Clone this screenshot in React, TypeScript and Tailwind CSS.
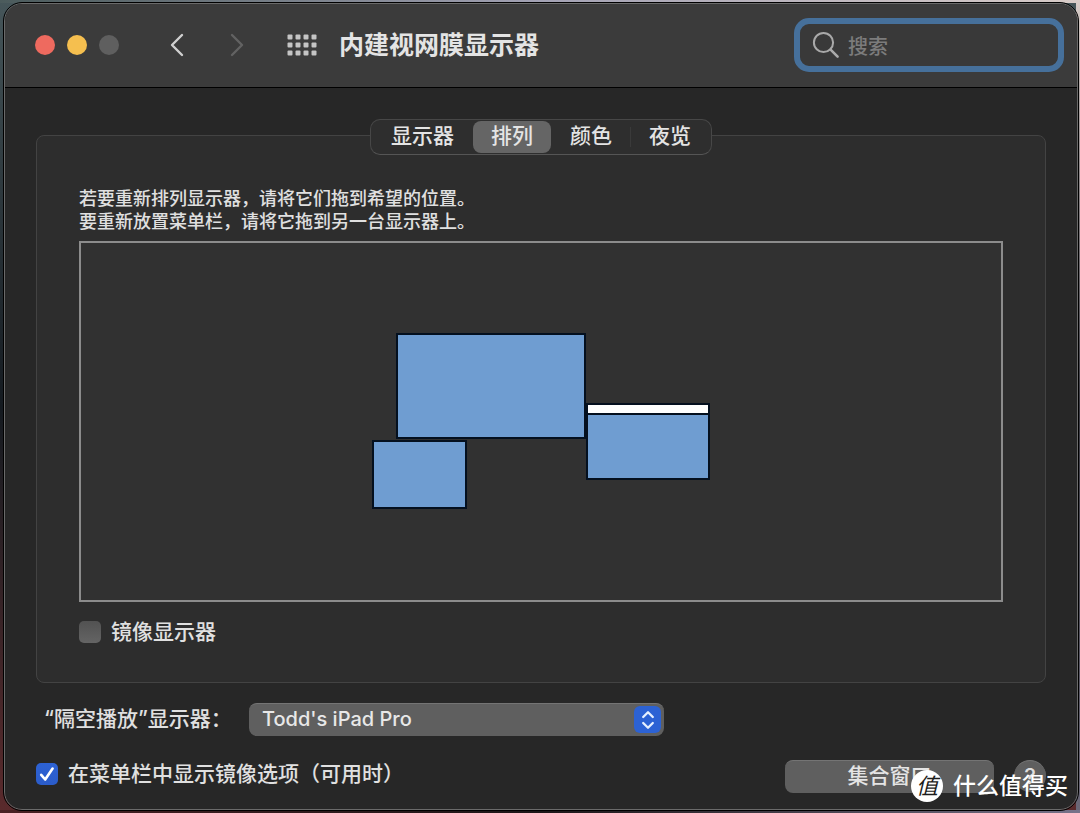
import { useState } from "react";
import { clsx } from "clsx";

const TABS = ["显示器", "排列", "颜色", "夜览"];

const TRAFFIC_LIGHTS = [
  { label: "关闭", color: "bg-[#ee6a5f]" },
  { label: "最小化", color: "bg-[#f5bf4f]" },
  { label: "缩放", color: "bg-[#5f5f5f]" },
];

const DISPLAYS = [
  { name: "外接显示器", box: "left-6 top-0 h-[106px] w-[190px]", menuBar: false },
  { name: "iPad", box: "left-0 top-[107px] h-[69px] w-[95px]", menuBar: false },
  { name: "内建显示器", box: "left-[214px] top-[70px] h-[77px] w-[124px]", menuBar: true },
];

function Chevron({ d, className }: { d: string; className: string }) {
  return (
    <svg viewBox="0 0 14 24" className={clsx("h-6 w-3.5", className)} fill="none" aria-hidden="true">
      <path d={d} stroke="currentColor" strokeWidth="2.4" strokeLinecap="round" strokeLinejoin="round" />
    </svg>
  );
}

function GridIcon() {
  return (
    <svg viewBox="0 0 30 22" className="h-[22px] w-[30px] text-[#c4c4c4]" fill="currentColor" aria-hidden="true">
      {[0, 8, 16].map((y) =>
        [0, 8, 16, 24].map((x) => (
          <rect key={`${x}-${y}`} x={x + 0.5} y={y + 0.5} width="5" height="5" rx="1" />
        )),
      )}
    </svg>
  );
}

function TitleBar() {
  return (
    <header className="flex h-[84px] shrink-0 items-center border-b border-black bg-[#3b3b3b] pr-[13px] pb-0.5 pl-[30px]">
      <div className="flex gap-3">
        {TRAFFIC_LIGHTS.map((light) => (
          <button key={light.label} aria-label={light.label} className={clsx("size-5 rounded-full", light.color)} />
        ))}
      </div>
      <nav className="ml-[51px] flex items-center">
        <button aria-label="后退">
          <Chevron d="M12 2 2 12l10 10" className="text-[#d0d0d0]" />
        </button>
        <button aria-label="前进" className="ml-[46px]">
          <Chevron d="M2 2l10 10L2 22" className="text-[#626262]" />
        </button>
        <button aria-label="显示全部" className="ml-[43px]">
          <GridIcon />
        </button>
      </nav>
      <h1 className="ml-[22px] whitespace-nowrap text-[25px] leading-8 font-bold text-[#e4e4e4]">内建视网膜显示器</h1>
      <label className="ml-auto flex h-[54px] w-[270px] items-center rounded-[15px] border-6 border-[#46709b] bg-[#393939] pl-3">
        <svg viewBox="0 0 28 28" className="size-7 shrink-0" fill="none" aria-hidden="true">
          <circle cx="11.5" cy="11.5" r="9.6" stroke="#a9a9a9" strokeWidth="2" />
          <path d="m18.6 18.6 7 7" stroke="#a9a9a9" strokeWidth="2.6" strokeLinecap="round" />
        </svg>
        <input
          type="search"
          aria-label="搜索"
          placeholder="搜索"
          className="ml-2 w-full min-w-0 bg-transparent pt-1 text-[20px] leading-7 text-[#e4e4e4] outline-none placeholder:text-[#7c7c7c]"
        />
      </label>
    </header>
  );
}

function Tabs({ active, onChange }: { active: string; onChange: (tab: string) => void }) {
  const activeIndex = TABS.indexOf(active);

  return (
    <div
      role="tablist"
      className="flex self-center rounded-[10px] border border-[#474747] border-b-[#555] bg-[#2e2e2e] px-0.5"
    >
      {TABS.map((tab, i) => (
        <div key={tab} className="flex items-center">
          {i > 0 && (
            <span
              className={clsx("h-5 w-px", i !== activeIndex && i !== activeIndex + 1 && "bg-[#3a3a3a]")}
            />
          )}
          <button
            role="tab"
            aria-selected={tab === active}
            onClick={() => onChange(tab)}
            className={clsx(
              "my-px h-8 rounded-lg px-[18px] pb-0.5 text-[21px] leading-[30px] text-[#e4e4e4]",
              tab === active && "bg-[#656565]",
            )}
          >
            {tab}
          </button>
        </div>
      ))}
    </div>
  );
}

function Checkbox({ label, defaultChecked }: { label: string; defaultChecked?: boolean }) {
  return (
    <label className="flex items-center gap-2.5 py-0.5 text-[21px] leading-6">
      <span className="grid size-[22px] place-items-center">
        <input
          type="checkbox"
          defaultChecked={defaultChecked}
          className="peer col-start-1 row-start-1 size-[22px] appearance-none rounded-[5px] bg-linear-to-b from-[#525252] to-[#646464] checked:from-[#2d62d4] checked:to-[#2b5cc9]"
        />
        <svg
          viewBox="0 0 22 22"
          className="pointer-events-none invisible col-start-1 row-start-1 size-[22px] peer-checked:visible"
          fill="none"
          aria-hidden="true"
        >
          <path d="m5.2 11.8 4 4.7 7.4-11" stroke="white" strokeWidth="2.6" strokeLinecap="round" strokeLinejoin="round" />
        </svg>
      </span>
      {label}
    </label>
  );
}

function Arrangement() {
  return (
    <div className="mt-2 flex min-h-[361px] flex-1 items-center justify-center border-2 border-[#8c8c8c] bg-[#313131]">
      <div className="relative h-[178px] w-[338px]">
        {DISPLAYS.map((display) => (
          <div
            key={display.name}
            title={display.name}
            className={clsx("absolute border-2 border-[#04101f] bg-[#6f9dd1]", display.box)}
          >
            {display.menuBar && <div className="h-2.5 border-b-2 border-[#04101f] bg-white" />}
          </div>
        ))}
      </div>
    </div>
  );
}

function AirPlayRow() {
  return (
    <div className="mt-5 flex items-center pl-2">
      <label htmlFor="airplay" className="w-[205px] whitespace-nowrap pb-0.5 text-[21px] leading-[30px]">
        “隔空播放”显示器：
      </label>
      <div className="relative w-[415px]">
        <select
          id="airplay"
          className="block h-[33px] w-full appearance-none rounded-lg border-t border-[#747474] bg-[#5f5f5f] pb-0.5 pl-[13px] text-[20px] leading-[30px] text-[#e8e8e8]"
        >
          <option>Todd's iPad Pro</option>
        </select>
        <span className="pointer-events-none absolute top-[3px] right-[3px] grid size-[27px] place-items-center rounded-md bg-[#2c62d4]">
          <svg viewBox="0 0 14 20" className="h-5 w-3.5" fill="none" aria-hidden="true">
            <path
              d="m2.2 7 4.8-4.8L11.8 7M2.2 13l4.8 4.8 4.8-4.8"
              stroke="#e6f0ff"
              strokeWidth="2.3"
              strokeLinecap="round"
              strokeLinejoin="round"
            />
          </svg>
        </span>
      </div>
    </div>
  );
}

function Watermark() {
  return (
    <div className="pointer-events-none absolute right-3 bottom-3 flex items-center gap-2.5 text-white">
      <span className="grid size-8 place-items-center rounded-full bg-white text-[22px] leading-none font-normal text-[#1c1c1c] italic">
        值
      </span>
      <span className="text-[23px] leading-8">什么值得买</span>
    </div>
  );
}

export default function App() {
  const [tab, setTab] = useState("排列");

  return (
    <div className="relative flex min-h-screen bg-linear-to-b from-[#46565a] via-[#141a20] to-[#5a2a2c] pt-[3px] pr-0.5 pb-1 pl-1 font-[Inter,'Noto_Sans_CJK_SC',sans-serif] font-medium text-[#e0e0e0]">
      <div className="absolute inset-x-0 top-0 h-[3px] bg-linear-to-r from-[#4b5b5c] via-[#a3a2b4] to-[#d8ccc8]" />
      <div className="absolute inset-y-0 right-0 w-1 bg-linear-to-b from-[#d8ccc8] via-[#3a3a42] to-[#6b6878]" />
      <div className="absolute inset-x-0 bottom-0 h-1 bg-linear-to-r from-[#4a2023] via-[#1c1618] to-[#77738a]" />
      <div className="relative flex flex-1 flex-col overflow-hidden rounded-[18px] border border-[#6a6a6a] bg-[#272727] outline outline-black">
        <TitleBar />
        <main className="flex flex-1 flex-col px-[31px] pt-[31px] pb-4">
          <div className="flex flex-1 flex-col">
            <div className="z-10 flex flex-col">
              <Tabs active={tab} onChange={setTab} />
            </div>
            <section className="-mt-5 flex flex-1 flex-col rounded-lg border border-[#434343] bg-[#2d2d2d] px-[42px] pt-[51px] pb-9">
              <p className="text-[18px] leading-[23px]">
                若要重新排列显示器，请将它们拖到希望的位置。
                <br />
                要重新放置菜单栏，请将它拖到另一台显示器上。
              </p>
              <Arrangement />
              <div className="mt-4">
                <Checkbox label="镜像显示器" />
              </div>
            </section>
          </div>
          <AirPlayRow />
          <footer className="mt-6 flex items-start">
            <Checkbox label="在菜单栏中显示镜像选项（可用时）" defaultChecked />
            <button className="ml-auto h-[33px] w-[209px] rounded-lg border-t border-[#747474] bg-[#5f5f5f] pb-0.5 text-[21px] leading-[30px] text-[#e4e4e4]">
              集合窗口
            </button>
            <button
              aria-label="帮助"
              className="ml-5 size-8 rounded-full border-t border-[#747474] bg-[#5f5f5f] pb-0.5 text-[22px] leading-7 text-[#dedede]"
            >
              ?
            </button>
          </footer>
        </main>
      </div>
      <Watermark />
    </div>
  );
}
